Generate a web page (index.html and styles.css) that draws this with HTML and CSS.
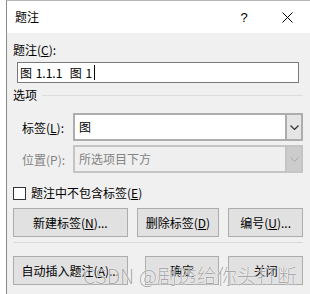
FILE: index.html
```
<!DOCTYPE html>
<html lang="zh-CN">
<head>
  <meta charset="UTF-8">
  <title>题注</title>
  <link rel="stylesheet" href="styles.css">
</head>
<body>
  <div class="window">
    <div class="titlebar">
      <span class="title">题注</span>
      <span class="help">?</span>
      <span class="close">
        <svg width="11" height="11" viewBox="0 0 11 11"><path d="M0.5 0.5 L10.5 10.5 M10.5 0.5 L0.5 10.5" stroke="#000" stroke-width="1" fill="none"/></svg>
      </span>
    </div>

    <div class="content">
      <div class="label">题注(<u>C</u>):</div>
      <div class="textbox">图 1.1.1&nbsp;&nbsp;图 1<span class="caret"></span></div>

      <div class="group-head">
        <span>选项</span>
        <div class="group-line"></div>
      </div>

      <div class="field-row">
        <span class="field-label">标签(<u>L</u>):</span>
        <div class="combo">
          <span class="combo-text">图</span>
          <span class="combo-btn">
            <svg width="9" height="5" viewBox="0 0 9 5"><path d="M0.5 0.5 L4.5 4.5 L8.5 0.5" stroke="#333" stroke-width="1.2" fill="none"/></svg>
          </span>
        </div>
      </div>

      <div class="field-row disabled">
        <span class="field-label">位置(P):</span>
        <div class="combo">
          <span class="combo-text">所选项目下方</span>
          <span class="combo-btn">
            <svg width="9" height="5" viewBox="0 0 9 5"><path d="M0.5 0.5 L4.5 4.5 L8.5 0.5" stroke="#a8a8a8" stroke-width="1" fill="none"/></svg>
          </span>
        </div>
      </div>

      <div class="check-row">
        <span class="checkbox"></span>
        <span>题注中不包含标签(<u>E</u>)</span>
      </div>

      <div class="btn-row">
        <button class="btn wide">新建标签(<u>N</u>)...</button>
        <button class="btn mid">删除标签(<u>D</u>)</button>
        <button class="btn small">编号(<u>U</u>)...</button>
      </div>

      <div class="separator"></div>

      <div class="btn-row">
        <button class="btn wide">自动插入题注(<u>A</u>)...</button>
        <button class="btn small push">确定</button>
        <button class="btn small">关闭</button>
      </div>
    </div>
  </div>

  <div class="watermark">CSDN @剧透给你头打断</div>
</body>
</html>
```

FILE: styles.css
```
body {
  margin: 0;
  background: #fff;
  font-family: "Noto Sans CJK SC", "Noto Sans", sans-serif;
  font-size: 12px;
  color: #000;
}
.window {
  margin-left: 6px;
  height: 293px;
  border-left: 1px solid #8a8a8a;
  border-top: 1px solid #b5b5b5;
  background: #f0f0f0;
}
.titlebar {
  height: 32px;
  background: #fff;
  display: flex;
  align-items: center;
  padding-left: 8px;
}
.title {
  flex: 1;
  line-height: 16px;
}
.help {
  width: 12px;
  text-align: center;
  margin-right: 32px;
  font-family: "Liberation Sans", sans-serif;
  font-size: 13px;
}
.close {
  display: flex;
  margin-right: 17px;
}
.content {
  padding: 9px 7px 0 6px;
}
.label {
  line-height: 16px;
}
.textbox {
  box-sizing: border-box;
  height: 21px;
  width: 282px;
  margin: 4px 0 0 4px;
  padding-left: 2px;
  background: #fff;
  border: 1px solid #7a7a7a;
  line-height: 19px;
  display: flex;
  align-items: center;
  white-space: pre;
  word-spacing: 1px;
}
.caret {
  display: inline-block;
  width: 1px;
  height: 15px;
  margin-left: 2px;
  background: #000;
}
.group-head {
  display: flex;
  align-items: center;
  margin-top: 4px;
  line-height: 16px;
}
.group-line {
  flex: 1;
  height: 1px;
  margin-left: 5px;
  background: #dcdcdc;
}
.field-row {
  display: flex;
  align-items: center;
  padding-left: 9px;
  margin-top: 4px;
}
.group-head + .field-row {
  margin-top: 10px;
}
.field-label {
  width: 51px;
}
.combo {
  flex: 1;
  box-sizing: border-box;
  height: 28px;
  display: flex;
  border: 2px solid #adadad;
  background: #fff;
}
.combo-text {
  flex: 1;
  padding-left: 4px;
  line-height: 24px;
}
.combo-btn {
  width: 14px;
  border-left: 2px solid #adadad;
  background: #e5e5e5;
  display: flex;
  align-items: center;
  justify-content: center;
}
.disabled .field-label,
.disabled .combo-text {
  color: #838383;
}
.disabled .combo {
  border-color: #c4c4c4;
  background: #efefef;
}
.disabled .combo-btn {
  border-left-color: #c4c4c4;
  background: #cccccc;
}
.check-row {
  display: flex;
  align-items: center;
  margin-top: 12px;
  line-height: 16px;
}
.checkbox {
  box-sizing: border-box;
  width: 13px;
  height: 13px;
  margin-right: 5px;
  background: #fff;
  border: 1px solid #333;
}
.btn-row {
  display: flex;
  gap: 9px;
  margin-top: 7px;
}
.separator + .btn-row {
  margin-top: 13px;
}
.btn {
  box-sizing: border-box;
  height: 29px;
  padding: 0;
  font: inherit;
  color: #000;
  background: #e1e1e1;
  border: 1px solid #adadad;
}
.btn.wide {
  width: 115px;
}
.btn.mid {
  width: 83px;
}
.btn.small {
  width: 75px;
}
.btn.push {
  margin-left: 8px;
}
.separator {
  height: 1px;
  margin-top: 5px;
  background: #d9d9d9;
}
.watermark {
  position: absolute;
  left: 83px;
  top: 263px;
  font-family: "Noto Sans CJK SC", sans-serif;
  font-weight: 300;
  font-size: 20px;
  line-height: 26px;
  color: rgba(140, 140, 140, 0.75);
  text-shadow: 0 0 1px #fff, 0 0 1px #fff;
  white-space: nowrap;
}
```
